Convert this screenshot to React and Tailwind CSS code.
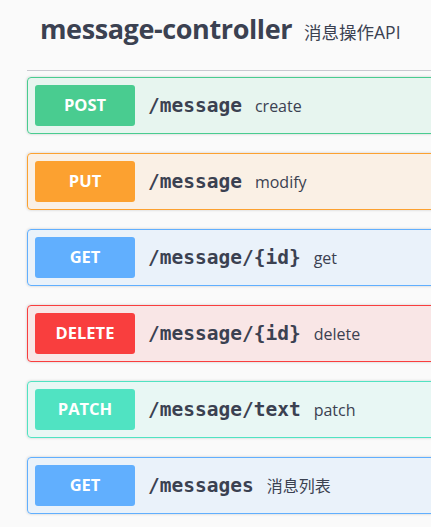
const ops = [
  { method: 'POST', path: '/message', desc: 'create', badge: 'bg-[#49cc90]', box: 'bg-[#49cc90]/10 border-[#49cc90]' },
  { method: 'PUT', path: '/message', desc: 'modify', badge: 'bg-[#fca130]', box: 'bg-[#fca130]/10 border-[#fca130]' },
  { method: 'GET', path: '/message/{id}', desc: 'get', badge: 'bg-[#61affe]', box: 'bg-[#61affe]/10 border-[#61affe]' },
  { method: 'DELETE', path: '/message/{id}', desc: 'delete', badge: 'bg-[#f93e3e]', box: 'bg-[#f93e3e]/10 border-[#f93e3e]' },
  { method: 'PATCH', path: '/message/text', desc: 'patch', badge: 'bg-[#50e3c2]', box: 'bg-[#50e3c2]/10 border-[#50e3c2]' },
  { method: 'GET', path: '/messages', desc: '消息列表', badge: 'bg-[#61affe]', box: 'bg-[#61affe]/10 border-[#61affe]' },
]

function OpBlock({ op }) {
  return (
    <div className={`flex items-center w-[440px] px-[7px] py-[7px] border rounded-[4px] shadow-[0_0_3px_rgba(0,0,0,0.19)] ${op.box}`}>
      <span className={`w-[100px] h-[41px] shrink-0 rounded-[3px] flex items-center justify-center text-white font-bold text-[16.5px] ${op.badge}`}>
        {op.method}
      </span>
      <span className="flex items-baseline">
        <span className="pl-[13px] text-[19.5px] font-bold text-[#3b4151] font-['DejaVu_Sans_Mono',monospace] whitespace-nowrap">
          {op.path}
        </span>
        <span className="pl-[13px] text-[16px] text-[#3b4151] whitespace-nowrap">
          {op.desc}
        </span>
      </span>
    </div>
  )
}

export default function App() {
  return (
    <div className="w-[431px] h-[527px] overflow-hidden bg-[#fafafa] font-['Open_Sans','Noto_Sans_CJK_SC',sans-serif]">
      <div className="ml-[27px] h-[71px] border-b border-[#c9c9d0] pl-[13px] pt-[13px] flex items-baseline gap-[12px]">
        <h2 className="text-[27px] leading-[32px] font-bold text-[#3b4151] tracking-[-0.4px] whitespace-nowrap">message-controller</h2>
        <span className="text-[17.5px] text-[#3b4151] whitespace-nowrap">消息操作API</span>
      </div>
      <div className="ml-[27px] mt-[6px] flex flex-col gap-[19px]">
        {ops.map((op, i) => (
          <OpBlock key={i} op={op} />
        ))}
      </div>
    </div>
  )
}
